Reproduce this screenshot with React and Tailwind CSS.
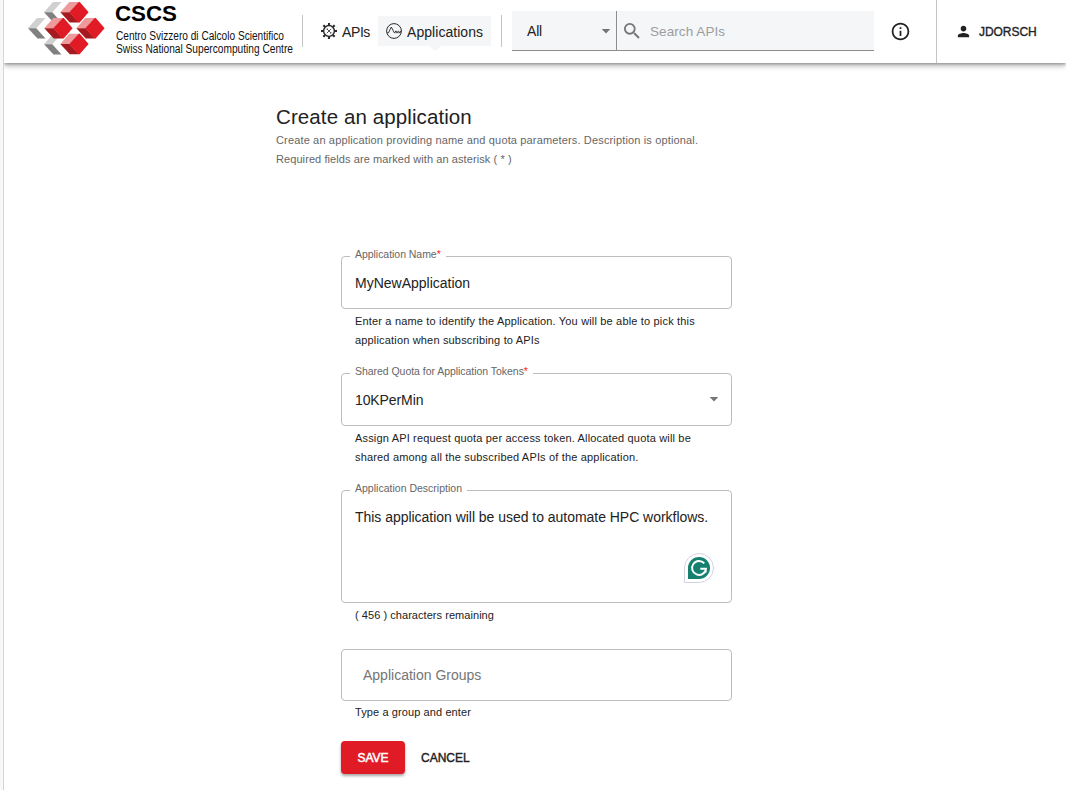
import React from "react";

function Cube({ x, y }) {
  return (
    <g transform={`translate(${x} ${y})`}>
      <path d="M0 10.200 9 0H19.500L9.300 10.200Z" fill="#ee9a9c" />
      <path d="M0 10.200H9.300L18.500 20.500H9.500Z" fill="#a41a1f" />
      <path d="M9 10.200 18.500 0H19.500L28.300 10.200 19.300 20.500H18Z" fill="#e01b25" />
    </g>
  );
}

function Chevron({ x, y }) {
  return (
    <g transform={`translate(${x} ${y})`}>
      <path d="M0 10.200 9 0H17.500L8.300 10.200Z" fill="#d0d0d0" />
      <path d="M0 10.200H8.300L17.500 20.500H9.500Z" fill="#808080" />
    </g>
  );
}

function Logo() {
  return (
    <svg width="298" height="63" viewBox="0 0 298 63" className="shrink-0 overflow-visible" fontFamily='"Liberation Sans", Arial, sans-serif' fill="#111">
      <Chevron x={40} y={2} />
      <Chevron x={24} y={18} />
      <Chevron x={40} y={34} />
      <Cube x={56.3} y={2} />
      <Cube x={40.3} y={18} />
      <Cube x={72.3} y={18} />
      <Cube x={56.3} y={33.7} />
      <text x="111" y="21" fontSize="22" fontWeight="700" textLength="62" lengthAdjust="spacingAndGlyphs" fill="#000">CSCS</text>
      <text x="112" y="39.500" fontSize="12" textLength="168" lengthAdjust="spacingAndGlyphs">Centro Svizzero di Calcolo Scientifico</text>
      <text x="112" y="53" fontSize="12" textLength="177" lengthAdjust="spacingAndGlyphs">Swiss National Supercomputing Centre</text>
    </svg>
  );
}

function GearIcon() {
  return (
    <svg width="16" height="16" viewBox="0 0 16 16" fill="none" stroke="#2a2a2a">
      <circle cx="8" cy="8" r="5.400" strokeWidth="1.500" />
      {[0, 45, 90, 135, 180, 225, 270, 315].map((a) => (
        <path key={a} d="M8 0V2.500" strokeWidth="2.100" transform={`rotate(${a} 8 8)`} />
      ))}
      <path d="M6 6 10 10M10.200 5.800 5.800 10.200" strokeWidth=".8" />
      <path d="M5.300 6.500 6.500 5.300M9.500 10.700 10.700 9.500" strokeWidth=".8" />
    </svg>
  );
}

function WaveIcon() {
  return (
    <svg width="16" height="16" viewBox="0 0 16 16" fill="none" stroke="#2a2a2a">
      <circle cx="8" cy="8" r="7.400" strokeWidth="1" />
      <path d="M1 9.800H2.500L5.300 4 8.300 9.800 10 7.900 11 9.800 12.500 7.900 13.500 9.800 15 8" strokeWidth=".9" />
      <path d="M8.500 9.700H15" strokeWidth=".5" />
    </svg>
  );
}

function Caret() {
  return <svg width="10" height="5" viewBox="0 0 10 5"><path d="M.7 0H9.300L5 4.600Z" fill="#757575" /></svg>;
}

function Header() {
  return (
    <header className="relative flex h-[63px] shrink-0 bg-white text-[14px] text-[#222] shadow-[0_2px_4px_rgba(0,0,0,0.24),0_4px_6px_rgba(0,0,0,0.12),0_0_3px_rgba(0,0,0,0.3)] [clip-path:inset(0_0_-16px_0)]">
      <div className="w-[298px] shrink-0"><Logo /></div>
      <div className="mt-[15px] h-8 w-px shrink-0 bg-[#c4c4c4]" />
      <nav className="ml-[18px] mt-4 flex h-[30px] shrink-0">
        <a className="flex w-[57px] items-center gap-[5px] tracking-[-0.400px]"><GearIcon /><span className="pt-[2px]">APIs</span></a>
        <a className="relative flex w-[113px] items-center gap-[5px] bg-[#f5f6f8] pl-2 tracking-[0.050px]">
          <WaveIcon /><span className="pt-[2px]">Applications</span>
          <svg className="absolute left-[51px] top-[30px]" width="12" height="5" viewBox="0 0 12 5"><path d="M0 0H12L6 5Z" fill="#f5f6f8" /></svg>
        </a>
      </nav>
      <div className="ml-[10px] mt-[15px] h-8 w-px shrink-0 bg-[#c4c4c4]" />
      <div className="ml-[10px] mt-[11px] flex h-10 w-[362px] shrink-0 border-b border-[#8c8d8e] bg-[#f5f6f8]">
        <div className="flex w-[105px] items-center justify-between border-r border-[#8c8d8e] pl-[15px] pr-[5px]"><span className="pt-[2px] tracking-[-0.200px]">All</span><span className="pt-[2px]"><Caret /></span></div>
        <div className="flex items-center gap-[8px] pl-[6px] text-[13.500px] tracking-[0.080px] text-[#9c9d9f]">
          <svg className="relative top-px" width="19" height="19" viewBox="1 2 22 22" fill="#757575"><path d="M15.500 14h-.79l-.28-.27A6.471 6.471 0 0 0 16 9.500 6.500 6.500 0 1 0 9.500 16c1.610 0 3.090-.59 4.230-1.570l.27.28v.79l5 4.990L20.490 19l-4.990-5zm-6 0C7.010 14 5 11.990 5 9.500S7.010 5 9.500 5 14 7.010 14 9.500 11.990 14 9.500 14z" transform="translate(-1 0) scale(1.040)" /></svg>
          <span className="pt-[3px]">Search APIs</span>
        </div>
      </div>
      <div className="flex w-[62px] shrink-0 items-center pl-4">
        <svg width="21" height="21" viewBox="0 0 24 24" fill="#222"><path d="M11 7h2v2h-2zm0 4h2v6h-2zm1-9C6.480 2 2 6.480 2 12s4.480 10 10 10 10-4.480 10-10S17.520 2 12 2zm0 18c-4.410 0-8-3.590-8-8s3.590-8 8-8 8 3.590 8 8-3.590 8-8 8z" /></svg>
      </div>
      <div className="flex flex-1 items-center border-l border-[#c4c4c4] pl-[18px] text-[12px] font-medium">
        <svg width="17" height="17" viewBox="0 0 24 24" fill="#222"><path d="M12 12c2.210 0 4-1.790 4-4s-1.790-4-4-4-4 1.790-4 4 1.790 4 4 4zm0 2c-2.670 0-8 1.340-8 4v2h16v-2c0-2.660-5.330-4-8-4z" /></svg>
        <span className="ml-[7px] tracking-[-0.050px] [-webkit-text-stroke:0.35px_#222]">JDORSCH</span>
      </div>
    </header>
  );
}

function Field({ label, required, boxClass, children }) {
  return (
    <div className={`relative rounded-[4px] border border-[#bdbdbd] text-[14px] ${boxClass}`}>
      {label && (
        <span className={`absolute -top-[10px] left-[8px] bg-white px-[5px] text-[10.500px] leading-[14px] text-[#666] whitespace-nowrap ${required ? "tracking-[-0.040px]" : "tracking-[0.010px]"}`}>
          {label}{required && <span className="text-[#f22]">*</span>}
        </span>
      )}
      {children}
    </div>
  );
}

function Help({ className = "mt-[3px] tracking-[0.170px]", children }) {
  return <p className={`ml-[14px] text-[11px] leading-[19px] whitespace-nowrap ${className}`}>{children}</p>;
}

export default function App() {
  return (
    <div className="flex h-[790px] w-[1066px] overflow-hidden bg-white text-[#222] [font-family:'Liberation_Sans',Arial,sans-serif]">
      <div className="w-1 shrink-0 border-r border-[#d5d5d5] bg-[#f8f8f8]" />
      <div className="flex min-w-0 flex-1 flex-col">
        <Header />
        <main className="pl-[272px] pt-[41px]">
          <h1 className="text-[20.500px] leading-[26px] tracking-[0.100px]">Create an application</h1>
          <p className="mt-px text-[11px] leading-[19px] tracking-[0.150px] text-[#666]">Create an application providing name and quota parameters. Description is optional.<br /><span className="tracking-[0.080px]">Required fields are marked with an asterisk ( * )</span></p>
          <form className="ml-[65px] mt-[87px] w-[391px]">
            <Field label="Application Name" required boxClass="h-[53px] flex items-center px-[13px]"><span className="pt-[2px]">MyNewApplication</span></Field>
            <Help>Enter a name to identify the Application. You will be able to pick this<br />application when subscribing to APIs</Help>
            <Field label="Shared Quota for Application Tokens" required boxClass="mt-[23px] h-[53px] flex items-center justify-between pl-[13px] pr-[12px]"><span className="pt-[2px] tracking-[-0.100px]">10KPerMin</span><Caret /></Field>
            <Help>Assign API request quota per access token. Allocated quota will be<br />shared among all the subscribed APIs of the application.</Help>
            <Field label="Application Description" boxClass="mt-[23px] h-[113px] px-[13px] pt-[16px] leading-5">
              <span className="whitespace-nowrap tracking-[-0.030px]">This application will be used to automate HPC workflows.</span>
              <svg className="absolute right-[17px] top-[62px]" width="30" height="30" viewBox="0 0 30 30">
                <path d="M.5 29.500V15A14.500 14.500 0 1 1 15 29.500Z" fill="#fff" stroke="#d3d2e5" />
                <path d="M4 26V15A11 11 0 1 1 15 26Z" fill="#15806f" />
                <path d="M20.300 10.300A7 7 0 1 0 22 15.800H16.300M21.700 15.800V19.500" fill="none" stroke="#fff" strokeWidth="1.900" />
              </svg>
            </Field>
            <Help className="mt-[3px] tracking-[0.050px]">( 456 ) characters remaining</Help>
            <Field boxClass="mt-6 h-[52px] flex items-center pl-[21px] text-[#757575]"><span>Application Groups</span></Field>
            <Help className="mt-[2px] tracking-[0.100px]">Type a group and enter</Help>
            <div className="mt-[19px] flex gap-4 text-[12px]">
              <button type="button" className="h-[33px] w-16 rounded-[4px] bg-[#e01b25] text-white shadow-[0_2px_3px_rgba(0,0,0,0.35)] [-webkit-text-stroke:0.5px_#fff]">SAVE</button>
              <button type="button" className="[-webkit-text-stroke:0.4px_#222]">CANCEL</button>
            </div>
          </form>
        </main>
      </div>
    </div>
  );
}
